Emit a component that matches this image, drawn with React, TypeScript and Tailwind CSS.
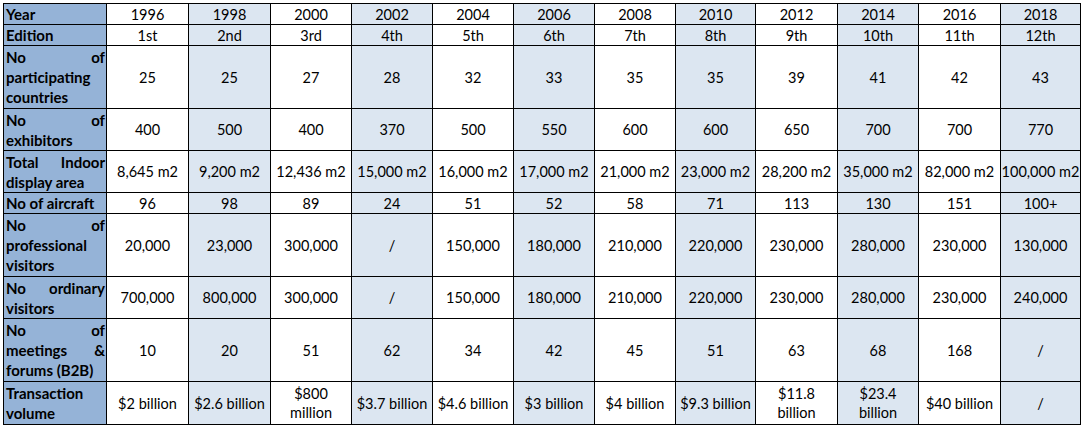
import React from "react";

type Head = (string | string[])[];

const years = ["1996","1998","2000","2002","2004","2006","2008","2010","2012","2014","2016","2018"];

const rows: { head: Head; cells: (string | string[])[] }[] = [
  { head: ["Year"], cells: years },
  { head: ["Edition"], cells: ["1st","2nd","3rd","4th","5th","6th","7th","8th","9th","10th","11th","12th"] },
  { head: [["No","of"],"participating","countries"], cells: ["25","25","27","28","32","33","35","35","39","41","42","43"] },
  { head: [["No","of"],"exhibitors"], cells: ["400","500","400","370","500","550","600","600","650","700","700","770"] },
  { head: [["Total","Indoor"],"display area"], cells: ["8,645 m2","9,200 m2","12,436 m2","15,000 m2","16,000 m2","17,000 m2","21,000 m2","23,000 m2","28,200 m2","35,000 m2","82,000 m2","100,000 m2"] },
  { head: ["No of aircraft"], cells: ["96","98","89","24","51","52","58","71","113","130","151","100+"] },
  { head: [["No","of"],"professional","visitors"], cells: ["20,000","23,000","300,000","/","150,000","180,000","210,000","220,000","230,000","280,000","230,000","130,000"] },
  { head: [["No","ordinary"],"visitors"], cells: ["700,000","800,000","300,000","/","150,000","180,000","210,000","220,000","230,000","280,000","230,000","240,000"] },
  { head: [["No","of"],["meetings","&"],"forums (B2B)"], cells: ["10","20","51","62","34","42","45","51","63","68","168","/"] },
  { head: ["Transaction","volume"], cells: ["$2 billion","$2.6 billion",["$800","million"],"$3.7 billion","$4.6 billion","$3 billion","$4 billion","$9.3 billion",["$11.8","billion"],["$23.4","billion"],"$40 billion","/"] },
];

export default function App() {
  return (
    <div className="w-[1084px] h-[429px] bg-white pt-[3px] pl-[3px]" style={{ fontFamily: "Lato, 'Liberation Sans', sans-serif" }}>
      <div className="grid w-max border-l border-t border-black grid-cols-[103px_82px_82px_81px_81px_81px_81px_81px_80px_82px_81px_82px_80px] grid-rows-[21px_21px_63px_42px_42px_21px_63px_42px_63px_43px] text-black">
        {rows.map((r, ri) => (
          <React.Fragment key={ri}>
            <div className="bg-[#95B3D7] border-r border-b border-black flex flex-col justify-center pl-[2px] pr-[1px] font-bold text-[15px] leading-[20px]">
              {r.head.map((l, li) =>
                Array.isArray(l) ? (
                  <div key={li} className="flex justify-between">
                    {l.map((w, wi) => (
                      <span key={wi}>{w}</span>
                    ))}
                  </div>
                ) : (
                  <div key={li} className="whitespace-nowrap">{l}</div>
                )
              )}
            </div>
            {r.cells.map((c, ci) => (
              <div
                key={ci}
                className={
                  "border-r border-b border-black flex flex-col items-center justify-center text-center text-[14.5px] leading-[19px] whitespace-nowrap " +
                  (ci % 2 === 1 ? "bg-[#DCE6F1]" : "bg-white")
                }
              >
                {Array.isArray(c) ? c.map((l, li) => <div key={li}>{l}</div>) : c}
              </div>
            ))}
          </React.Fragment>
        ))}
      </div>
    </div>
  );
}
